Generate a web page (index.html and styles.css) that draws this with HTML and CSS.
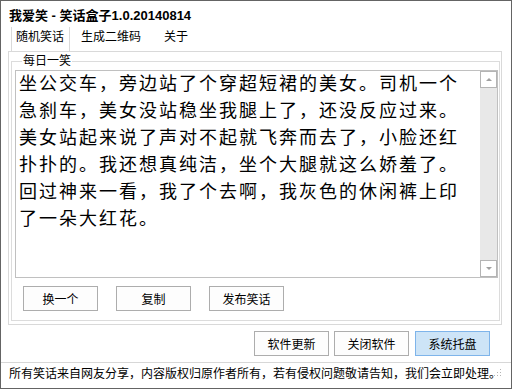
FILE: index.html
```html
<!DOCTYPE html>
<html lang="zh-CN">
<head>
  <meta charset="UTF-8">
  <title>我爱笑 - 笑话盒子</title>
  <link rel="stylesheet" href="styles.css">
</head>
<body>
  <div class="window">
    <div class="title">我爱笑 - 笑话盒子<span class="ver">1.0.20140814</span></div>

    <div class="tabs">
      <div class="tab active">随机笑话</div>
      <div class="tab">生成二维码</div>
      <div class="tab">关于</div>
    </div>

    <div class="tab-page">
      <fieldset class="group">
        <legend>每日一笑</legend>
        <div class="joke-box">
          <div class="joke-text">坐公交车，旁边站了个穿超短裙的美女。司机一个<br>急刹车，美女没站稳坐我腿上了，还没反应过来。<br>美女站起来说了声对不起就飞奔而去了，小脸还红<br>扑扑的。我还想真纯洁，坐个大腿就这么娇羞了。<br>回过神来一看，我了个去啊，我灰色的休闲裤上印<br>了一朵大红花。</div>
          <div class="scrollbar">
            <div class="sb-btn up"></div>
            <div class="sb-track"></div>
            <div class="sb-btn down"></div>
          </div>
        </div>
        <div class="joke-actions">
          <button class="btn">换一个</button>
          <button class="btn">复制</button>
          <button class="btn">发布笑话</button>
        </div>
      </fieldset>
    </div>

    <div class="main-actions">
      <button class="btn">软件更新</button>
      <button class="btn">关闭软件</button>
      <button class="btn focused">系统托盘</button>
    </div>

    <div class="statusbar">
      <span class="status-text">所有笑话来自网友分享，内容版权归原作者所有，若有侵权问题敬请告知，我们会立即处理。</span>
      <svg class="grip" width="8" height="10" viewBox="0 0 8 10">
        <rect x="6" y="1" width="1" height="1" fill="#b4b4b4"/>
        <rect x="6" y="4" width="1" height="1" fill="#b4b4b4"/>
        <rect x="6" y="7" width="1" height="1" fill="#b4b4b4"/>
        <rect x="3" y="4" width="1" height="1" fill="#b4b4b4"/>
        <rect x="3" y="7" width="1" height="1" fill="#b4b4b4"/>
        <rect x="0" y="7" width="1" height="1" fill="#b4b4b4"/>
      </svg>
    </div>
  </div>
</body>
</html>
```

FILE: styles.css
```css
body {
  margin: 0;
  padding: 0;
  background-color: #fff;
  font-family: "Liberation Sans", "Noto Sans CJK SC", sans-serif;
  font-size: 12px;
  color: #000;
}
.window {
  width: 512px;
  height: 389px;
  box-sizing: border-box;
  border: 1px solid #646464;
  display: flex;
  flex-direction: column;
  background-color: #fff;
}
.title {
  height: 26px;
  box-sizing: border-box;
  padding: 3px 0 0 8px;
  line-height: 23px;
  font-size: 13px;
  font-weight: bold;
}
.tabs {
  display: flex;
  height: 24px;
  padding-left: 10px;
  line-height: 21px;
}
.tab {
  padding: 0 11px 0 10px;
  border-left: 1px solid transparent;
  border-right: 1px solid transparent;
}
.tab.active {
  padding: 0 5px 0 4px;
  border-left-color: #d9d9d9;
  border-right-color: #d9d9d9;
}
.tab-page {
  margin: 0 9px 0 7px;
  border: 1px solid #d9d9d9;
}
.group {
  margin: 2px 1px 3px 2px;
  padding: 2px 1px 9px 3px;
  border: 1px solid #dcdcdc;
}
.group legend {
  margin-left: 7px;
  padding: 0 1px;
  line-height: 14px;
}
.joke-box {
  display: flex;
  height: 208px;
  box-sizing: border-box;
  border: 1px solid #c0c0c0;
}
.joke-text {
  flex: 1;
  padding: 0 0 0 3px;
  font-size: 18px;
  letter-spacing: 2px;
  line-height: 27px;
  white-space: nowrap;
  overflow: hidden;
}
.scrollbar {
  width: 17px;
  display: flex;
  flex-direction: column;
  background-color: #e8e8e8;
}
.sb-btn {
  height: 17px;
  box-sizing: border-box;
  border: 1px solid #b4b4b4;
  background-color: #fff;
  display: flex;
  align-items: center;
  justify-content: center;
}
.sb-btn::after {
  content: "";
  border-left: 3px solid transparent;
  border-right: 3px solid transparent;
}
.sb-btn.up::after {
  border-bottom: 3px solid #a0a0a0;
}
.sb-btn.down::after {
  border-top: 3px solid #a0a0a0;
}
.sb-track {
  flex: 1;
}
.btn {
  width: 75px;
  height: 25px;
  padding: 0;
  border: 1px solid #adadad;
  background-color: #fdfdfd;
  font-family: inherit;
  font-size: 12px;
  color: #000;
}
.btn.focused {
  background-color: #cde4f7;
  border-color: #7eb4ea;
}
.joke-actions {
  display: flex;
  gap: 18px;
  margin-top: 8px;
  padding-left: 8px;
}
.main-actions {
  display: flex;
  justify-content: flex-end;
  gap: 5px;
  margin: 6px 21px 0 0;
}
.main-actions .btn:last-child {
  margin-left: 1px;
}
.statusbar {
  position: relative;
  flex: 1;
  margin-top: 6px;
  border-top: 1px solid #d7d7d7;
  padding: 1px 0 0 8px;
  line-height: 20px;
}
.status-text {
  white-space: nowrap;
}
.grip {
  position: absolute;
  right: 9px;
  top: 5px;
}
```
